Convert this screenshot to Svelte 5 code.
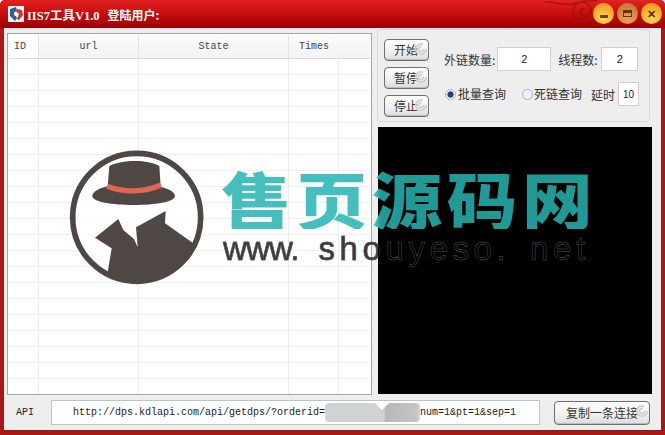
<script>
    const columns = [
        { name: 'ID', width: 30 },
        { name: 'url', width: 100 },
        { name: 'State', width: 150 },
        { name: 'Times', width: 50 }
    ];
    const rows = Array.from({ length: 21 });
    const sideButtons = ['开始', '暂停', '停止'];
</script>

{#snippet swirl()}
    <svg class="swirl" viewBox="0 0 16 16" aria-hidden="true">
        <path d="M14 8a6 6 0 1 1-4-5.6M11 8a3 3 0 1 1-2-2.8" fill="none" stroke="#cfcfcf" stroke-width="2"/>
    </svg>
{/snippet}

<div class="window">
    <header class="titlebar">
        <svg class="app-icon" viewBox="0 0 16 16" aria-hidden="true">
            <rect width="16" height="16" fill="#f4f4f4"/>
            <path d="M2 3l6-2 1 3-3 3 3 5-2 3-5-5z" fill="#2c5f9e"/>
            <path d="M9 3l5 1 1 5-4 5-2-1 2-5-3-2z" fill="#c23a3a"/>
            <circle cx="8" cy="8" r="2" fill="#fff"/>
        </svg>
        <span class="title">IIS7工具V1.0</span>
        <span class="title user">登陆用户:</span>

        <svg class="deco" viewBox="0 0 70 28" aria-hidden="true">
            <g fill="none" stroke="#8a0c0c" stroke-width="1.5" opacity=".6">
                <path d="M0 2c12 0 20 4 28 2s12-4 24-3"/>
                <path d="M36 20a9 9 0 1 1 10-9c0 5-6 7-9 4s-1-7 3-6"/>
                <path d="M46 24c8-1 14-6 16-12"/>
            </g>
        </svg>

        <div class="controls">
            <span class="ctl min"><i></i></span>
            <span class="ctl max"><i></i></span>
            <span class="ctl close">✕</span>
        </div>
    </header>

    <main class="body">
        <div class="top">
            <section class="list">
                <div class="list-head">
                    {#each columns as col}
                        <div class="head-cell" class:first={col.name === 'ID'} style="width: {col.width}px">{col.name}</div>
                    {/each}
                </div>
                <div class="list-rows">
                    {#each rows as _}
                        <div class="row">
                            {#each columns as col}
                                <div class="cell" style="width: {col.width}px"></div>
                            {/each}
                        </div>
                    {/each}
                </div>
            </section>

            <aside class="side">
                <div class="group">
                    <div class="side-buttons">
                        {#each sideButtons as label}
                            <button class="btn small">{label}{@render swirl()}</button>
                        {/each}
                    </div>
                    <div class="options">
                        <div class="opt-row one">
                            <label for="links">外链数量:</label>
                            <input id="links" class="num links" value="2" />
                            <label for="threads" class="threads-label">线程数:</label>
                            <input id="threads" class="num threads" value="2" />
                        </div>
                        <div class="opt-row two">
                            <span class="radio on"></span><span class="radio-text">批量查询</span>
                            <span class="radio off"></span><span class="radio-text">死链查询</span>
                            <span class="delay">延时</span>
                            <input class="num delay-input" value="10" />
                        </div>
                    </div>
                </div>
                <div class="console"></div>
            </aside>
        </div>

        <footer class="api">
            <span class="api-label">API</span>
            <div class="api-url">
                <span>http://dps.kdlapi.com/api/getdps/?orderid=</span><span class="blot"></span><span>num=1&amp;pt=1&amp;sep=1</span>
            </div>
            <button class="btn copy">复制一条连接{@render swirl()}</button>
        </footer>
    </main>

    <!-- watermark over the whole window -->
    <svg class="mark-logo" viewBox="0 0 480 480" aria-hidden="true">
        <defs>
            <clipPath id="ring"><circle cx="230" cy="232" r="192"/></clipPath>
        </defs>
        <circle cx="230" cy="232" r="192" fill="#fff" fill-opacity=".8" stroke="#4f4744" stroke-width="17"/>
        <path d="M148 78c40-20 115-20 150 0l4 62c22 6 42 14 43 28 0 18-60 27-124 27s-124-9-124-27c0-14 24-24 46-29z" fill="#4f4744"/>
        <path d="M142 139c50 20 110 18 161-4" fill="none" stroke="#e0674f" stroke-width="16"/>
        <path d="M105 293L175 237L190 270L222 297L233 322L228 262L317 213L315 250L400 310L440 500L125 500L145 385L155 325z" fill="#4f4744" clip-path="url(#ring)"/>
    </svg>
    <div class="mark-name">售页源码网</div>
    <div class="mark-url"><span class="www">www.</span> shouyeso. net</div>
</div>

<style>
    :global(body) {
        margin: 0;
        background: #fff;
    }

    .window {
        position: relative;
        width: 665px;
        height: 435px;
        box-sizing: border-box;
        display: flex;
        flex-direction: column;
        overflow: hidden;
        background: #ac1616;
        border-radius: 5px 5px 0 0;
        font-family: "Noto Sans CJK SC", "Liberation Sans", sans-serif;
        color: #333;
    }

    .titlebar {
        position: relative;
        height: 28px;
        flex: none;
        display: flex;
        align-items: center;
        padding-left: 8px;
        background: linear-gradient(#e02222 0%, #cf1212 35%, #b20606 75%, #9c0202 100%);
        color: #fff;
    }

    .app-icon {
        width: 16px;
        height: 16px;
        margin-right: 3px;
    }

    .title {
        font-family: "Liberation Serif", "Noto Sans CJK SC", serif;
        font-weight: bold;
        font-size: 12.5px;
    }

    .user {
        margin-left: 8px;
        font-family: "Noto Sans CJK SC", sans-serif;
        font-size: 12px;
    }

    .deco {
        position: absolute;
        left: 545px;
        top: 0;
        width: 70px;
        height: 28px;
    }

    .controls {
        position: absolute;
        left: 593px;
        top: 3px;
        display: flex;
        gap: 3px;
    }

    .ctl {
        width: 21px;
        height: 21px;
        border-radius: 50%;
        display: flex;
        align-items: center;
        justify-content: center;
        background: radial-gradient(circle at 50% 75%, #ffd75a, #f0a020 75%);
        color: #5a2a08;
        font-size: 11px;
        font-weight: bold;
        line-height: 1;
    }

    .max {
        background: radial-gradient(circle at 50% 75%, #e9a35a, #c97a34 75%);
    }

    .min i {
        width: 8px;
        height: 3px;
        margin-top: 5px;
        background: #7a4010;
    }

    .max i {
        width: 9px;
        height: 7px;
        box-sizing: border-box;
        border: 1px solid #6a3010;
        border-top-width: 3px;
    }

    .body {
        flex: 1;
        margin: 0 4px 4px;
        min-height: 0;
        display: flex;
        flex-direction: column;
        background: #efeeee;
        border-bottom: 1px solid #7c2020;
    }

    .top {
        flex: none;
        height: 367px;
        display: flex;
    }

    .list {
        width: 365px;
        height: 362px;
        margin: 5px 0 0 3px;
        box-sizing: border-box;
        border: 1px solid #a6a6a6;
        background: #fff;
        padding: 1px;
        overflow: hidden;
    }

    .list-head {
        height: 23px;
        display: flex;
        background: linear-gradient(#fbfbfb, #f3f3f4);
        border-bottom: 1px solid #d8dbe0;
    }

    .head-cell {
        box-sizing: border-box;
        flex: none;
        text-align: center;
        padding-top: 5px;
        font-family: "Liberation Mono", monospace;
        font-size: 10px;
        line-height: 14px;
        color: #444;
        border-right: 1px solid #e3e3e6;
    }

    .head-cell.first {
        background: #fff;
        text-align: left;
        padding-left: 5px;
    }

    .head-cell:last-child {
        border-right: 0;
    }

    .row {
        height: 16px;
        box-sizing: border-box;
        display: flex;
        border-bottom: 1px solid #efefef;
    }

    .cell {
        flex: none;
        box-sizing: border-box;
        border-right: 1px solid #ececec;
    }

    .side {
        margin-left: 5px;
        width: 275px;
        display: flex;
        flex-direction: column;
    }

    .group {
        width: 273px;
        height: 93px;
        margin-top: 1px;
        box-sizing: border-box;
        display: flex;
        border: 1px solid #dadada;
        border-radius: 4px;
        padding: 9px 0 0 6px;
    }

    .side-buttons {
        display: flex;
        flex-direction: column;
        gap: 6px;
    }

    .btn {
        position: relative;
        box-sizing: border-box;
        padding: 0;
        border: 1px solid #6f6f6f;
        border-radius: 4px;
        background: linear-gradient(#ffffff, #f0f0f0 60%, #dcdcdc);
        box-shadow: inset 0 -1px 0 #bdbdbd;
        font-family: "Noto Sans CJK SC", sans-serif;
        color: #333;
        overflow: hidden;
    }

    .btn.small {
        width: 45px;
        height: 22px;
        font-size: 12px;
        line-height: 20px;
        text-align: left;
        padding-left: 9px;
    }

    .swirl {
        position: absolute;
        right: 0;
        top: 2px;
        width: 14px;
        height: 14px;
    }

    .options {
        margin-left: 15px;
        flex: 1;
        font-size: 12px;
    }

    .opt-row {
        display: flex;
        align-items: center;
    }

    .opt-row.one {
        margin-top: 8px;
        height: 24px;
    }

    .opt-row.two {
        margin-top: 11px;
        height: 24px;
    }

    .num {
        box-sizing: border-box;
        height: 24px;
        padding: 0;
        border: 1px solid #cfcfcf;
        background: #fff;
        text-align: center;
        font-family: "Liberation Sans", sans-serif;
        font-size: 11px;
        color: #222;
        outline: none;
    }

    .links {
        width: 54px;
        margin-left: 2px;
    }

    .threads-label {
        margin-left: 7px;
        width: 43px;
    }

    .threads {
        width: 37px;
    }

    .radio {
        width: 11px;
        height: 11px;
        box-sizing: border-box;
        border-radius: 50%;
        border: 1px solid #aab4c2;
        background: #eef2f7;
        flex: none;
    }

    .radio.on {
        background: radial-gradient(circle, #1f3f78 42%, #e8eef5 55%);
        margin-left: 1px;
        margin-right: 2px;
    }

    .radio.off {
        margin-left: 16px;
        margin-right: 1px;
    }

    .radio-text {
        line-height: 16px;
    }

    .delay {
        margin-left: 9px;
    }

    .delay-input {
        width: 21px;
        margin-left: 3px;
        font-size: 10px;
    }

    .console {
        width: 274px;
        height: 267px;
        margin: 5px 0 0 1px;
        background: #000;
    }

    .api {
        flex: 1;
        display: flex;
        align-items: center;
    }

    .api-label {
        width: 47px;
        padding-left: 12px;
        box-sizing: border-box;
        font-family: "Liberation Mono", monospace;
        font-size: 10px;
        color: #222;
    }

    .api-url {
        box-sizing: border-box;
        width: 489px;
        height: 25px;
        display: flex;
        align-items: center;
        padding-left: 21px;
        border: 1px solid #b4c8c4;
        background: #fff;
        font-family: "Liberation Mono", monospace;
        font-size: 10px;
        color: #222;
        white-space: nowrap;
    }

    .blot {
        position: relative;
        width: 95px;
        height: 19px;
        flex: none;
        border-radius: 4px;
        background: linear-gradient(90deg, #d2d2d2 0 62%, #b8b8b8 64%, #c4c4c4 96%, #d8d8d8);
    }

    .blot::after {
        content: "";
        position: absolute;
        left: 50px;
        top: 0;
        border-top: 7px solid #fff;
        border-left: 7px solid transparent;
        border-right: 7px solid transparent;
    }

    .copy {
        width: 96px;
        height: 24px;
        margin-left: 14px;
        font-size: 12px;
        line-height: 22px;
        text-align: left;
        padding-left: 11px;
    }

    .mark-logo {
        position: absolute;
        left: 60px;
        top: 140px;
        width: 160px;
        height: 160px;
    }

    .mark-name {
        position: absolute;
        left: 221px;
        top: 167px;
        font-family: "Noto Sans CJK SC", sans-serif;
        font-weight: 900;
        font-size: 62px;
        line-height: 62px;
        letter-spacing: 4px;
        white-space: nowrap;
        color: transparent;
        background: linear-gradient(90deg, #45bfbd 0 136px, #1f9a97 140px);
        -webkit-background-clip: text;
        background-clip: text;
        transform: scaleX(1.14);
        transform-origin: left center;
    }

    /* dark fill on the list, only the thin edge shows on the black panel */
    .mark-url {
        position: absolute;
        left: 223px;
        top: 230px;
        font-family: "Liberation Sans", sans-serif;
        font-size: 33px;
        line-height: 38px;
        letter-spacing: 4.6px;
        word-spacing: 6px;
        white-space: nowrap;
        color: transparent;
        background: linear-gradient(90deg, #3a3a3a 0 155px, #000 155px);
        -webkit-background-clip: text;
        background-clip: text;
        -webkit-text-stroke: 0.5px #555;
    }

    .www {
        letter-spacing: -0.8px;
    }
</style>
